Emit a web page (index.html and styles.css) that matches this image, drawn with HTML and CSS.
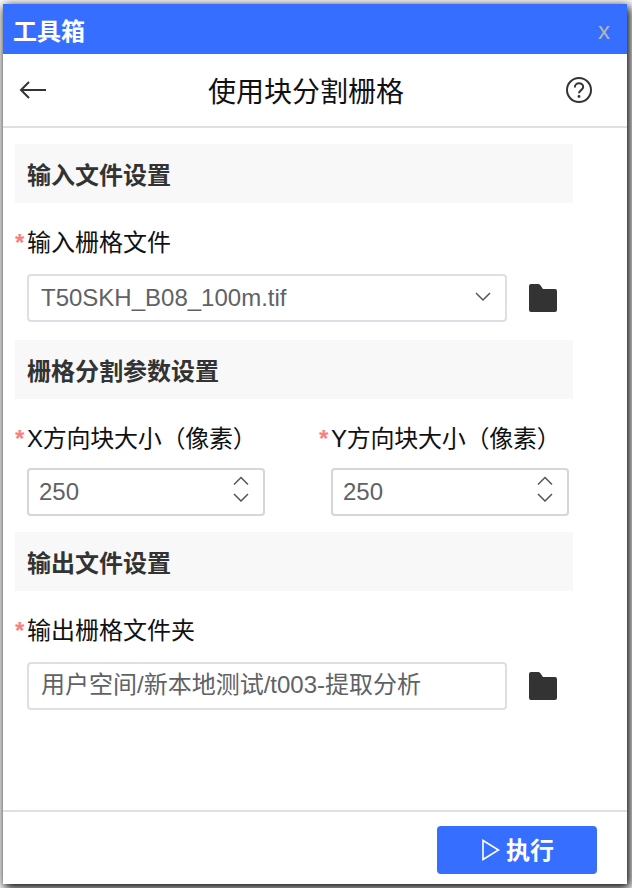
FILE: index.html
```html
<!DOCTYPE html>
<html lang="zh-CN">
<head>
    <meta charset="UTF-8">
    <meta name="viewport" content="width=device-width, initial-scale=1.0">
    <title>工具箱</title>
    <link rel="stylesheet" href="styles.css">
</head>
<body>
    <div class="window">
        <header class="titlebar">
            <span class="titlebar-name">工具箱</span>
            <span class="titlebar-close">x</span>
        </header>

        <div class="toolbar">
            <svg class="back-icon" width="28" height="20" viewBox="0 0 28 20"><path d="M27 10H2M10 2L2 10l8 8" fill="none" stroke="#333" stroke-width="2"/></svg>
            <h1 class="toolbar-title">使用块分割栅格</h1>
            <svg class="help-icon" width="26" height="26" viewBox="0 0 26 26">
                <circle cx="13" cy="13" r="12" fill="none" stroke="#333" stroke-width="2"/>
                <path d="M8.8 10.4c0-2.500 1.900-4.200 4.200-4.200s4.200 1.600 4.200 3.800c0 3-4.200 3.200-4.200 6.200" fill="none" stroke="#333" stroke-width="2"/>
                <circle cx="13" cy="19.500" r="1.400" fill="#333"/>
            </svg>
        </div>

        <main class="content">
            <h2 class="section-title">输入文件设置</h2>
            <label class="field-label"><span class="req">*</span>输入栅格文件</label>
            <div class="path-row">
                <div class="control path-control">
                    <span>T50SKH_B08_100m.tif</span>
                    <svg class="select-arrow" width="16" height="10" viewBox="0 0 16 10"><path d="M1 1l7 7 7-7" fill="none" stroke="#555" stroke-width="1.500"/></svg>
                </div>
                <svg class="folder-icon" width="28" height="28" viewBox="0 0 28 28"><path d="M0 2a2 2 0 0 1 2-2h7a3 3 0 0 1 2.400 1.200L14 5h12a2 2 0 0 1 2 2v19a2 2 0 0 1-2 2H2a2 2 0 0 1-2-2z" fill="#333"/></svg>
            </div>

            <h2 class="section-title">栅格分割参数设置</h2>
            <div class="size-row">
                <div class="size-field">
                    <label class="field-label"><span class="req">*</span>X方向块大小（像素）</label>
                    <div class="control number-control">
                        <span>250</span>
                        <svg class="stepper" width="16" height="26" viewBox="0 0 16 26"><path d="M1 8.500l7-7 7 7M1 18l7 7 7-7" fill="none" stroke="#555" stroke-width="1.500"/></svg>
                    </div>
                </div>
                <div class="size-field">
                    <label class="field-label"><span class="req">*</span>Y方向块大小（像素）</label>
                    <div class="control number-control">
                        <span>250</span>
                        <svg class="stepper" width="16" height="26" viewBox="0 0 16 26"><path d="M1 8.500l7-7 7 7M1 18l7 7 7-7" fill="none" stroke="#555" stroke-width="1.500"/></svg>
                    </div>
                </div>
            </div>

            <h2 class="section-title">输出文件设置</h2>
            <label class="field-label"><span class="req">*</span>输出栅格文件夹</label>
            <div class="path-row">
                <div class="control path-control">
                    <span class="cjk-value">用户空间/新本地测试/t003-提取分析</span>
                </div>
                <svg class="folder-icon" width="28" height="28" viewBox="0 0 28 28"><path d="M0 2a2 2 0 0 1 2-2h7a3 3 0 0 1 2.400 1.200L14 5h12a2 2 0 0 1 2 2v19a2 2 0 0 1-2 2H2a2 2 0 0 1-2-2z" fill="#333"/></svg>
            </div>
        </main>

        <footer class="footer">
            <button class="run-btn">
                <svg width="18" height="22" viewBox="0 0 18 22"><path d="M1 1.500L16.500 11 1 20.500z" fill="none" stroke="#fff" stroke-width="1.600"/></svg>
                <span class="run-text">执行</span>
            </button>
        </footer>
    </div>
</body>
</html>
```

FILE: styles.css
```css
/* General Styles */
body {
    margin: 0;
    font-family: "Liberation Sans", "Noto Sans CJK SC", sans-serif;
    background: #fff;
}

.window {
    width: 624px;
    height: 880px;
    margin: 4px 5px 4px 3px;
    display: flex;
    flex-direction: column;
    background: #fff;
    box-shadow: 2px 3px 10px 1px #000;
}

/* Title bar */
.titlebar {
    height: 50px;
    background: #366fff;
    padding: 0 17px 0 10px;
    display: flex;
    align-items: center;
    justify-content: space-between;
    color: #fff;
}

.titlebar-name {
    font-size: 24px;
    font-weight: bold;
}

.titlebar-close {
    font-size: 24px;
    color: #b4b4b4;
    position: relative;
    top: 2px;
}

/* Toolbar */
.toolbar {
    height: 72px;
    border-bottom: 2px solid #dde0e5;
    padding: 0 35px 0 16px;
    display: flex;
    align-items: center;
    justify-content: space-between;
}

.toolbar-title {
    margin: 0 1px 0 0;
    font-size: 28px;
    font-weight: normal;
    color: #111;
}

/* Form */
.content {
    flex: 1;
    padding: 16px 54px 0 12px;
}

.section-title {
    box-sizing: border-box;
    margin: 0;
    height: 59px;
    line-height: 59px;
    padding: 2px 0 0 12px;
    background: #f8f8f8;
    font-size: 24px;
    font-weight: bold;
    color: #333;
}

.field-label {
    display: block;
    box-sizing: border-box;
    height: 38px;
    line-height: 38px;
    padding-top: 1px;
    margin-top: 20px;
    font-size: 24px;
    color: #111;
    white-space: nowrap;
}

.req {
    display: inline-block;
    width: 12px;
    font-weight: bold;
    color: #fb7d7d;
}

.control {
    box-sizing: border-box;
    height: 48px;
    border: 2px solid #dcdfe6;
    border-radius: 4px;
    display: flex;
    align-items: center;
    justify-content: space-between;
    font-size: 24px;
    color: #606266;
}

.cjk-value {
    padding-bottom: 7px;
}

.select-arrow {
    margin-bottom: 2px;
}

.path-row {
    display: flex;
    align-items: center;
    margin: 13px 0 18px 12px;
}

.path-control {
    width: 480px;
    padding: 0 14px 0 12px;
    flex: none;
}

.folder-icon {
    margin-left: 22px;
    flex: none;
}

.size-row {
    display: flex;
    gap: 54px;
    margin-bottom: 16px;
}

.size-field {
    width: 250px;
    flex: none;
}

.size-field .field-label {
    letter-spacing: -0.25px;
}

.number-control {
    width: 238px;
    margin: 11px 0 0 12px;
    padding: 0 14px 0 10px;
    border-color: #d6d6d6;
}

.stepper {
    margin-bottom: 6px;
}

/* Footer */
.footer {
    box-sizing: border-box;
    height: 74px;
    border-top: 2px solid #dde0e5;
    padding: 14px 30px 0 0;
    display: flex;
    justify-content: flex-end;
    align-items: flex-start;
}

.run-btn {
    width: 160px;
    height: 48px;
    padding: 0 0 0 2px;
    border: none;
    border-radius: 4px;
    background: #366fff;
    color: #fff;
    font-family: inherit;
    font-size: 24px;
    font-weight: bold;
    display: flex;
    align-items: center;
    justify-content: center;
    gap: 6px;
    cursor: pointer;
}

.run-text {
    margin-bottom: 4px;
}
```
